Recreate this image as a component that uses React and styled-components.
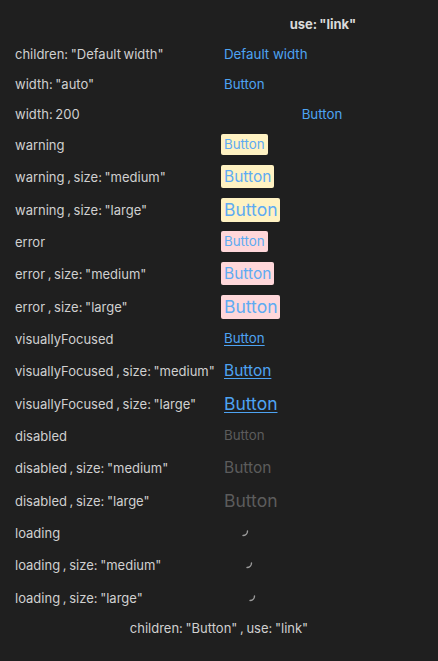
import React from "react";
import styled, { createGlobalStyle, css } from "styled-components";

const Global = createGlobalStyle`
  html, body { margin: 0; padding: 0; background: #1f1f1f; }
  body { font-family: Inter, "Noto Sans", sans-serif; color: #d0d0d0; }
`;

const Page = styled.div`
  padding: 9px 15px 0 15px;
  min-height: 661px;
  box-sizing: border-box;
  background: #1f1f1f;
`;

const Grid = styled.div`
  display: grid;
  grid-template-columns: 206px 202px;
`;

const HeaderCell = styled.div`
  grid-column: 2;
  height: 30px;
  display: flex;
  align-items: center;
  justify-content: center;
  font-weight: 700;
  font-size: 13px;
  word-spacing: -1px;
  color: #dadada;
  padding-left: 2px;
`;

const Label = styled.div`
  height: ${(p) => p.$h}px;
  display: flex;
  align-items: center;
  font-size: 13px;
  word-spacing: -1px;
  color: #d0d0d0;
  white-space: nowrap;
`;

const Cell = styled.div`
  height: ${(p) => p.$h}px;
  display: flex;
  align-items: center;
`;

const sizes = {
  small: { fs: 13.3, lh: 17 },
  medium: { fs: 15.5, lh: 19 },
  large: { fs: 17.5, lh: 20 },
};

const LinkButton = styled.button`
  position: relative;
  box-sizing: content-box;
  font-family: Inter, "Noto Sans", sans-serif;
  font-size: ${(p) => sizes[p.$size].fs}px;
  line-height: ${(p) => sizes[p.$size].lh}px;
  padding: 2px 3px;
  margin: 0;
  border: none;
  border-radius: 2px;
  background: transparent;
  color: #4ea3f2;
  cursor: pointer;
  text-align: center;
  white-space: nowrap;
  ${(p) => p.$width === 200 && css`width: 200px;`}
  ${(p) => p.$variant === "warning" && css`background: #fff2c2; color: #5eabf2;`}
  ${(p) => p.$variant === "error" && css`background: #ffd7da; color: #5eabf2;`}
  ${(p) => p.$variant === "focused" && css`
    text-decoration: underline;
    text-underline-offset: 2px;
    text-decoration-thickness: 1px;
  `}
  ${(p) => p.$variant === "disabled" && css`color: #5c5c5c; cursor: default;`}
  ${(p) => p.$variant === "loading" && css`color: transparent;`}
`;

const SpinnerWrap = styled.span`
  position: absolute;
  left: 50%;
  top: 50%;
  width: 12px;
  height: 12px;
  margin: -8px 0 0 -7px;
  display: flex;
`;

const Spinner = () => (
  <SpinnerWrap>
    <svg width="12" height="12" viewBox="0 0 12 12">
      <path d="M10.5 6 A4.5 4.5 0 0 1 6 10.5" fill="none" stroke="#9a9a9a" strokeWidth="1.4" strokeLinecap="round" />
    </svg>
  </SpinnerWrap>
);

const Footer = styled.div`
  height: 28px;
  display: flex;
  align-items: center;
  justify-content: center;
  font-size: 13px;
  word-spacing: -1px;
  color: #d0d0d0;
`;

const rowH = { small: 31, medium: 33, large: 33 };

const rows = [
  { label: 'children: "Default width"', text: "Default width", h: 30 },
  { label: 'width: "auto"', h: 30 },
  { label: "width: 200", width: 200, h: 30 },
];
["warning", "error", "focused", "disabled", "loading"].forEach((v) => {
  const name = v === "focused" ? "visuallyFocused" : v;
  ["small", "medium", "large"].forEach((s) => {
    rows.push({
      label: s === "small" ? name : `${name} , size: "${s}"`,
      variant: v,
      size: s,
      h: rowH[s],
    });
  });
});

export default function App() {
  return (
    <Page>
      <Global />
      <Grid>
        <HeaderCell>use: "link"</HeaderCell>
        {rows.map((r, i) => (
          <React.Fragment key={i}>
            <Label $h={r.h}>{r.label}</Label>
            <Cell $h={r.h}>
              <LinkButton
                $size={r.size || "small"}
                $variant={r.variant}
                $width={r.width}
                disabled={r.variant === "disabled"}
              >
                {r.text || "Button"}
                {r.variant === "loading" && <Spinner />}
              </LinkButton>
            </Cell>
          </React.Fragment>
        ))}
      </Grid>
      <Footer>children: "Button" , use: "link"</Footer>
    </Page>
  );
}
